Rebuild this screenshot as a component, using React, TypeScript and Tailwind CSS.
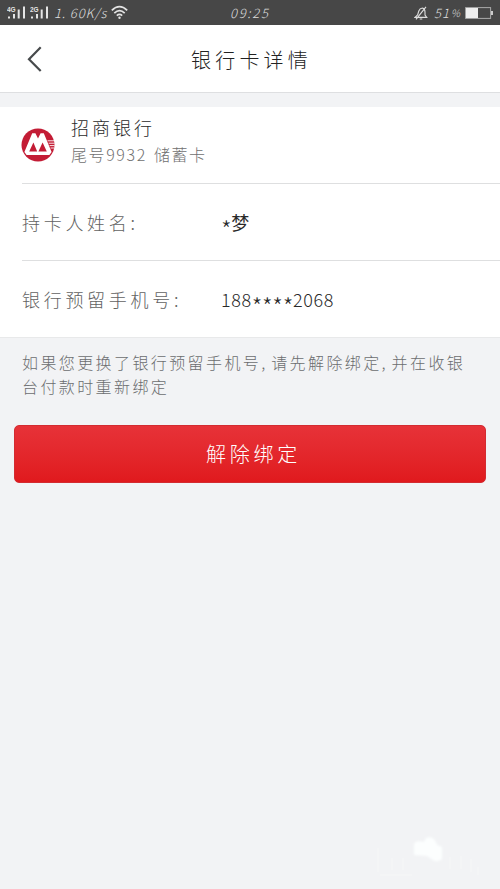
import type { ReactNode } from 'react';

function Signal({ label }: { label: string }) {
  return (
    <svg width="19" height="14" viewBox="0 0 19 14" fill="#e4e4e4">
      <text x="0" y="5.5" fontSize="6.5" fontWeight="700" fontFamily="Liberation Sans, sans-serif">{label}</text>
      <rect x="1" y="10.5" width="2" height="2" />
      <rect x="6" y="8" width="2" height="4.5" />
      <rect x="10.7" y="3.5" width="2" height="9" />
      <rect x="16" y="0.5" width="2" height="12" />
    </svg>
  );
}

function StatusBar() {
  return (
    <div className="grid h-[25px] shrink-0 grid-cols-[230px_1fr_auto] items-center bg-[#474747] pl-[7px] pr-[7px] text-[13px] font-light leading-none text-[#dedede]">
      <div className="flex items-center">
        <Signal label="4G" />
        <span className="w-[4px]" />
        <Signal label="2G" />
        <span className="ml-[5px] w-[57px] whitespace-nowrap italic tracking-[0.9px]">1. 60K/s</span>
        <svg width="17" height="15" viewBox="0 0 17 15" fill="none" stroke="#e4e4e4" strokeWidth="1.7">
          <path d="M.8 5.4Q8.5-2 16.2 5.4M3.3 8.1Q8.5 3 13.7 8.1M5.8 10.6Q8.5 8.2 11.2 10.6" />
          <circle cx="8.5" cy="12.8" r="1.2" fill="#e4e4e4" stroke="none" />
        </svg>
      </div>
      <span className="-ml-[7px] italic tracking-[1.7px]">09:25</span>
      <div className="flex items-center">
        <svg width="14" height="14" viewBox="0 0 14 14" fill="none" stroke="#dedede" strokeWidth="1.1">
          <path d="M1 11.4 3.6 9 4.8 5C5.4 3.2 6.6 2.2 8.4 2 10.3 2.4 11 4 11 6V9L12.8 11.4ZM5.7 13h2.6M12 .8 2 13.4" />
        </svg>
        <span className="ml-[6px] flex w-[31px] items-center whitespace-nowrap text-[13px] italic tracking-[1px]">
          51<span className="ml-[1px] text-[10px]">%</span>
        </span>
        <svg width="28" height="12" viewBox="0 0 28 12">
          <rect x=".6" y=".6" width="25" height="10.8" fill="none" stroke="#aaa" />
          <rect x="1" y="1" width="12" height="10" fill="#eee" />
          <rect x="26" y="4" width="2" height="4" fill="#ccc" />
        </svg>
      </div>
    </div>
  );
}

function BankLogo() {
  return (
    <svg className="shrink-0" width="34" height="34" viewBox="0 0 34 34">
      <circle cx="17" cy="17" r="16.5" fill="#c31c35" />
      <path d="M11.2 5.2h3.2l2.6 5.4 2.6-5.4h3.2L30.6 24l-2.2 3H5.6l-2.2-3Z" fill="#fff" />
      <path d="M12.4 14.5 8.2 23.6h8ZM21.6 14.5l-4.2 9.1h8.4Z" fill="#c31c35" />
      <path d="M26.5 12.8h7M27.6 15.2h6M28.6 17.6h5M29.6 20h3.6" stroke="#fff" strokeWidth=".9" />
    </svg>
  );
}

function InfoRow({ label, children }: { label: string; children: ReactNode }) {
  return (
    <div className="ml-[22px] flex h-[77px] items-center border-t border-[#dedfe0] text-[18px] font-light">
      <span className="w-[199px] whitespace-nowrap tracking-[3.7px] text-[#626262]">{label}</span>
      <span className="flex items-center whitespace-nowrap text-[#292929]">{children}</span>
    </div>
  );
}

function Stars({ count }: { count: number }) {
  return (
    <span className="flex h-[27px] pt-[4px] text-[24px] leading-[32px] tracking-[-0.3px]">{'*'.repeat(count)}</span>
  );
}

export default function App() {
  return (
    <main className="flex h-[889px] w-[500px] flex-col overflow-hidden bg-[#f2f3f5] font-['Noto_Sans_CJK_SC',sans-serif] font-light">
      <StatusBar />
      <header className="grid h-[68px] shrink-0 grid-cols-[70px_1fr_70px] items-center border-b border-[#dedfe1] bg-white">
        <svg className="ml-[26px]" width="18" height="28" viewBox="0 0 18 28" fill="none" stroke="#474a4c" strokeWidth="2.2">
          <path d="M14.7 2.3 3 14.2 14.7 26" />
        </svg>
        <h1 className="pl-[3px] pt-[2px] text-center text-[20px] leading-[26px] tracking-[4.2px] text-[#222]">银行卡详情</h1>
      </header>
      <section className="mt-[14px] shrink-0 border-b border-[#e8e9ea] bg-white">
        <div className="flex h-[76px] items-center pl-[21px]">
          <BankLogo />
          <div className="ml-[16px] flex h-full flex-col pt-[7px]">
            <span className="h-[27px] text-[18px] leading-[27px] tracking-[3px] text-[#292929]">招商银行</span>
            <span className="flex h-[27px] whitespace-nowrap text-[16px] leading-[27px] text-[#707070]">
              <span className="w-[83px] tracking-[1.6px]">尾号9932</span>
              <span className="tracking-[1.5px]">储蓄卡</span>
            </span>
          </div>
        </div>
        <InfoRow label="持卡人姓名:">
          <Stars count={1} />
          <span className="font-normal">梦</span>
        </InfoRow>
        <InfoRow label="银行预留手机号:">
          <span className="tracking-[0.6px]">188</span>
          <Stars count={4} />
          <span className="tracking-[0.6px]">2068</span>
        </InfoRow>
      </section>
      <p className="ml-[22px] mt-[12px] shrink-0 whitespace-nowrap text-[16px] leading-[24px] tracking-[2.4px] text-[#6b6d6f]">
        如果您更换了银行预留手机号<span className="inline-block w-[10px]">,</span>请先解除绑定<span className="inline-block w-[10px]">,</span>并在收银
        <br />
        台付款时重新绑定
      </p>
      <button className="mx-[14px] mt-[27px] h-[58px] shrink-0 rounded-[5px] border border-[#d32b31] bg-linear-to-b from-[#e73238] to-[#e0191d] pl-[7px] text-[20px] font-light tracking-[3.7px] text-white">
        解除绑定
      </button>
      <svg className="ml-[370px] mt-auto shrink-0" width="130" height="79" viewBox="0 0 130 79">
        <defs>
          <filter id="soft"><feGaussianBlur stdDeviation="1.3" /></filter>
        </defs>
        <path d="M44 34q2-4 10-2l2-4q8-3 11 7l5 2v12q-5 4-9 1l-6-4-13-1Z" fill="#fcfefe" filter="url(#soft)" />
        <path d="M8 38v24M22 48v12M33 48v12M80 47v12M91 46v13M101 49v13M108 57v8M10 65h32" fill="none" stroke="#f4f5f6" strokeWidth="2" />
      </svg>
    </main>
  );
}
